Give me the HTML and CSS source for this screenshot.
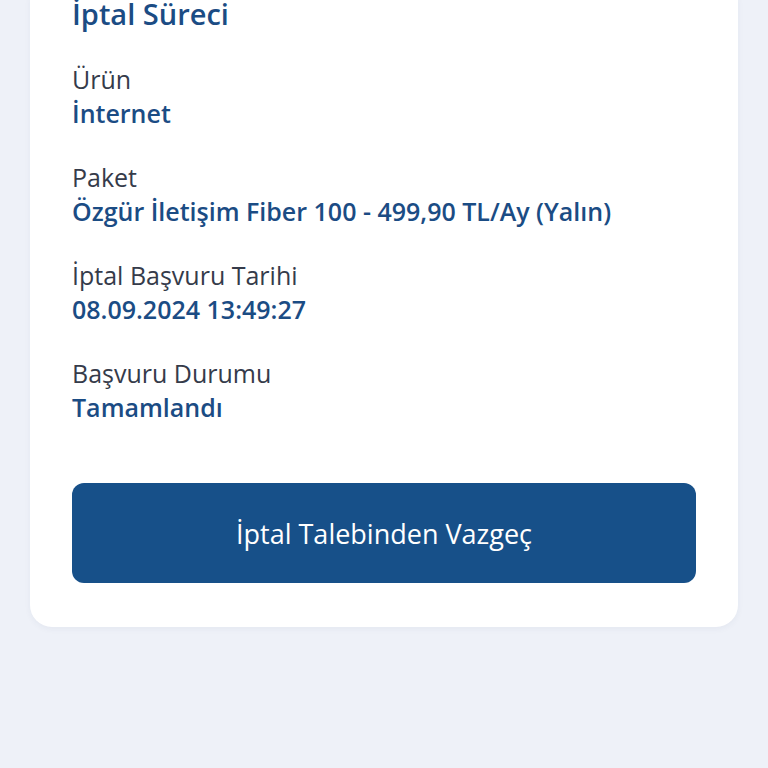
FILE: index.html
```html
<!DOCTYPE html>
<html lang="tr">
<head>
<meta charset="utf-8">
<link rel="stylesheet" href="styles.css">
</head>
<body>
<div class="page">
  <section class="card">
    <h1 class="title">İptal Süreci</h1>
    <div class="field">
      <div class="label">Ürün</div>
      <div class="value">İnternet</div>
    </div>
    <div class="field">
      <div class="label">Paket</div>
      <div class="value">Özgür İletişim Fiber 100 - 499,90 TL/Ay (Yalın)</div>
    </div>
    <div class="field">
      <div class="label">İptal Başvuru Tarihi</div>
      <div class="value">08.09.2024 13:49:27</div>
    </div>
    <div class="field">
      <div class="label">Başvuru Durumu</div>
      <div class="value">Tamamlandı</div>
    </div>
    <button class="btn">İptal Talebinden Vazgeç</button>
  </section>
</div>
</body>
</html>
```
FILE: styles.css
```css
html, body {
  margin: 0;
  padding: 0;
}
body {
  background: #eef1f8;
  font-family: "Open Sans", "Noto Sans", sans-serif;
  width: 768px;
  height: 768px;
  overflow: hidden;
}
.page {
  padding: 0 30px;
}
.card {
  background: #ffffff;
  border-radius: 0 0 22px 22px;
  padding: 0 42px 44px;
  box-shadow: 0 2px 6px rgba(30, 50, 90, 0.05);
}
.title {
  margin: -4px 0 0;
  font-size: 29px;
  line-height: 36px;
  font-weight: 600;
  color: #1b4c84;
}
.field {
  margin-top: 30px;
}
.title + .field {
  margin-top: 30px;
}
.label {
  font-size: 25px;
  line-height: 34px;
  color: #353b4a;
}
.value {
  font-size: 25px;
  line-height: 34px;
  font-weight: 600;
  color: #1b4c84;
}
.btn {
  display: block;
  width: 100%;
  height: 100px;
  margin-top: 59px;
  border: none;
  border-radius: 12px;
  background: #175089;
  color: #ffffff;
  font-family: inherit;
  font-size: 27px;
}
```
